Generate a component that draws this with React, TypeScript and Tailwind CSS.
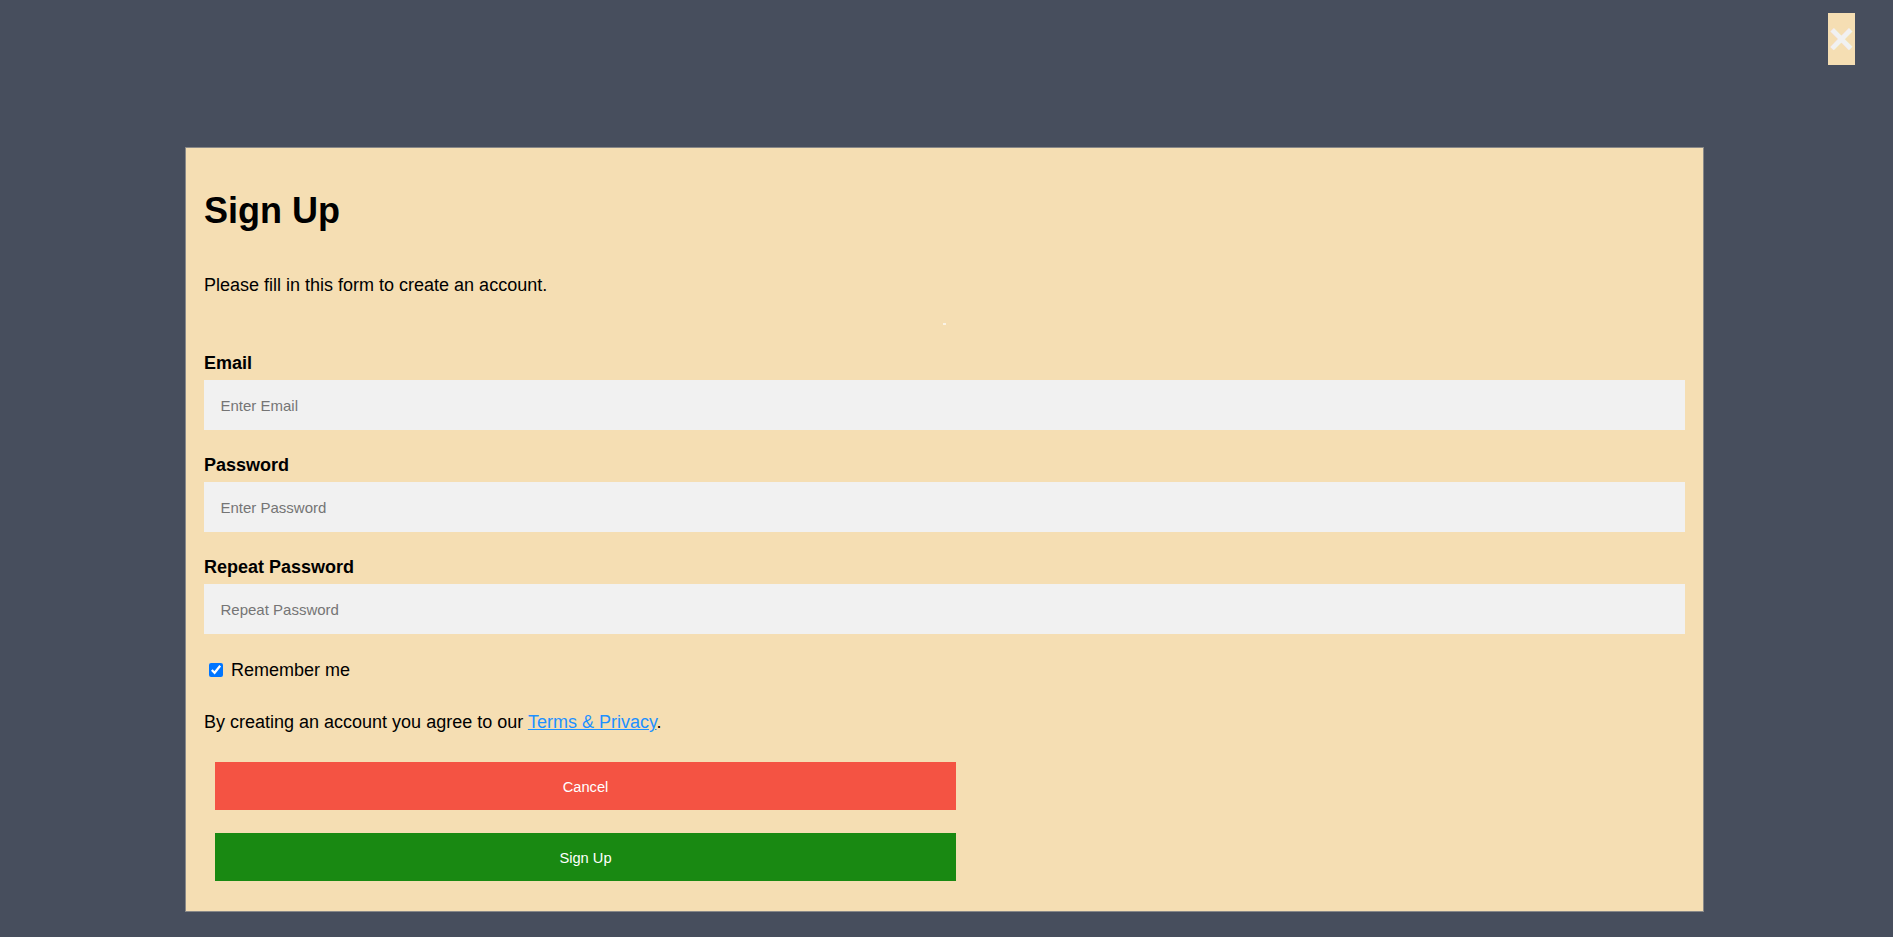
import React from "react";

const font = "font-['Liberation_Sans',Arial,sans-serif]";

function Field({ label, placeholder, type }: { label: string; placeholder: string; type: string }) {
  return (
    <>
      <label className="block mt-[26px] first:mt-[29px] text-[18px] leading-[18px] font-bold text-black">{label}</label>
      <input
        type={type}
        placeholder={placeholder}
        className={`block mt-[8px] w-full h-[50px] px-[16.5px] bg-[#f1f1f1] border-none outline-none text-[15px] text-black placeholder:text-[#757575] ${font}`}
      />
    </>
  );
}

export default function App() {
  return (
    <div className={`relative h-[937px] bg-[#474e5d] overflow-hidden ${font}`}>
      <span className="absolute top-[13px] right-[38px] w-[27px] h-[52px] flex items-center justify-center bg-[#f5deb3] text-[#f1f1f1] text-[44px] font-bold leading-none cursor-pointer">
        ×
      </span>

      <div className="pt-[147px]">
        <form className="ml-[185px] w-[1519px] bg-[#f5deb3] border border-[#888] px-[18px] pb-[30px]">
          <h1 className="mt-[45px] text-[36px] leading-[35px] font-bold text-black">Sign Up</h1>
          <p className="mt-[48px] text-[18px] leading-[18px] text-black">Please fill in this form to create an account.</p>
          <div className="mt-[29px] mx-auto w-[3px] h-[2px] bg-[#faf3e6]" />

          <div>
            <Field label="Email" placeholder="Enter Email" type="text" />
            <Field label="Password" placeholder="Enter Password" type="password" />
            <Field label="Repeat Password" placeholder="Repeat Password" type="password" />
          </div>

          <label className="mt-[27px] flex items-start text-[18px] leading-[18px] text-black">
            <input type="checkbox" defaultChecked className="ml-[5px] mt-[2px] w-[14px] h-[14px] accent-[#0075ff]" />
            <span className="ml-[8px]">Remember me</span>
          </label>

          <p className="mt-[34px] text-[18px] leading-[18px] text-black">
            By creating an account you agree to our{" "}
            <a href="#" className="text-[#1e90ff] underline">Terms &amp; Privacy</a>.
          </p>

          <div className="ml-[11px] w-[741px]">
            <button type="button" className={`block mt-[31px] w-full h-[48px] pt-[2px] bg-[#f45343] text-white text-[14.67px] ${font}`}>
              Cancel
            </button>
            <button type="submit" className={`block mt-[23px] w-full h-[48px] pt-[2px] bg-[#198912] text-white text-[14.67px] ${font}`}>
              Sign Up
            </button>
          </div>
        </form>
      </div>
    </div>
  );
}
